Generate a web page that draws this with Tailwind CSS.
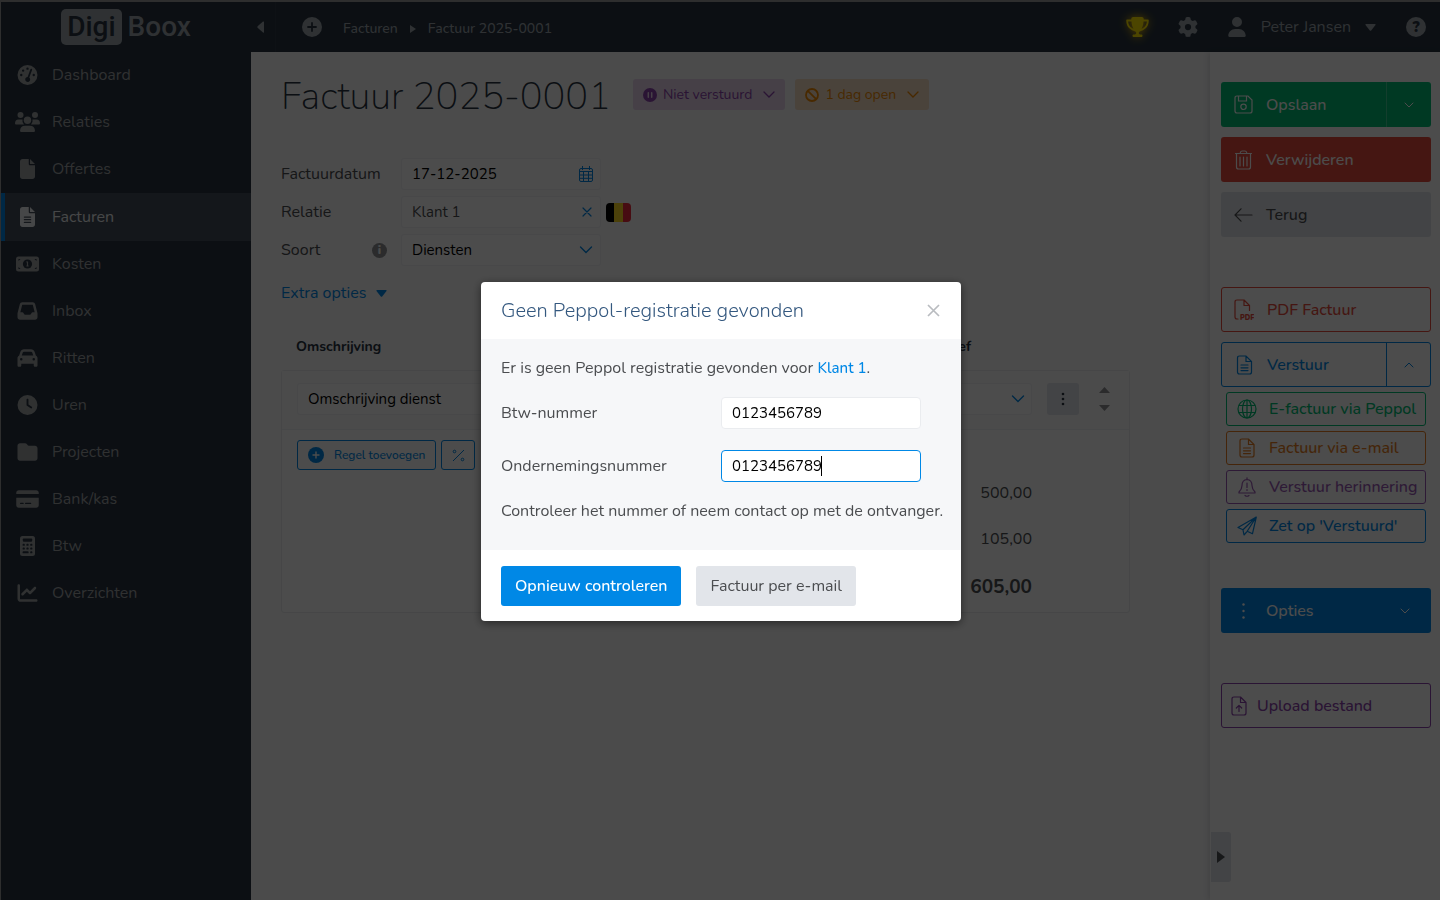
<!DOCTYPE html>
<html lang="nl">
<head>
  <meta charset="UTF-8" />
  <meta name="viewport" content="width=device-width, initial-scale=1.0" />
  <title>Factuur 2025-0001 - DigiBoox</title>
  <script src="https://cdn.jsdelivr.net/npm/@tailwindcss/browser@4"></script>
</head>
<body class="min-h-screen flex flex-col border-t-2 border-l border-[#9a9a9a] bg-[#fafafb] font-[Nunito,Lato,sans-serif] text-base leading-5 text-[#4b4d50]">

  <!-- Topbar -->
  <header class="h-[50px] flex items-center bg-[#283441] text-[#9da4ab]">
    <a href="#" class="w-[250px] shrink-0 flex items-center justify-center gap-[6px] font-[Roboto,sans-serif] text-[28px] font-medium leading-9">
      <span class="rounded-[5px] bg-[#9da4ab] px-[6px] text-[#283441]">Digi</span>
      <span>Boox</span>
    </a>
    <div class="flex-1 flex items-center">
      <button type="button" aria-label="Menu inklappen" class="w-6 h-[50px] -ml-6 border-r border-[#303b47] box-content pr-6">
        <svg class="ml-[30px] w-[7px] h-3 fill-current" viewBox="0 0 7 12"><path d="M7 1v10q0 1-1 .4L.6 6.7Q0 6 .6 5.300L6 .6Q7 0 7 1z"/></svg>
      </button>
      <button type="button" aria-label="Nieuw" class="ml-[26px]">
        <svg class="size-5" viewBox="0 0 20 20"><circle cx="10" cy="10" r="10" fill="currentColor"/><path d="M10 6v8M6 10h8" stroke="#283441" stroke-width="1.800" stroke-linecap="round"/></svg>
      </button>
      <nav class="ml-[21px] pt-[3px] flex items-center gap-3 text-sm font-medium">
        <a href="#">Facturen</a>
        <svg class="w-[6px] h-2 fill-current" viewBox="0 0 6 8"><path d="M0 0l6 4-6 4z"/></svg>
        <a href="#">Factuur 2025-0001</a>
      </nav>
      <div class="ml-auto flex items-center pr-[14px]">
        <button type="button" aria-label="Prestaties">
          <svg class="w-[23px] h-5 fill-[#ffe600] drop-shadow-[0_0_5px_#ffc800]" viewBox="0 0 576 512"><path d="M400 0H176c-26.500 0-48.100 21.800-47.100 48.200c.2 5.300 .4 10.600 .7 15.800H24C10.700 64 0 74.700 0 88c0 92.600 33.500 157 78.500 200.700c44.300 43.100 98.300 64.800 138.100 75.800c23.400 6.500 39.400 26 39.400 45.600c0 20.900-17 37.900-37.900 37.900H192c-17.700 0-32 14.300-32 32s14.300 32 32 32H384c17.700 0 32-14.300 32-32s-14.300-32-32-32H357.900C337 448 320 431 320 410.100c0-19.600 15.900-39.200 39.400-45.600c39.900-11 93.900-32.700 138.200-75.800C542.500 245 576 180.600 576 88c0-13.300-10.700-24-24-24H446.400c.3-5.200 .5-10.400 .7-15.800C448.100 21.800 426.500 0 400 0zM48.900 112h84.400c9.100 90.100 29.200 150.300 51.900 190.600c-24.900-11-50.800-26.500-73.200-48.300c-32-31.100-58-76-63-142.300zM464.100 254.300c-22.400 21.800-48.300 37.300-73.200 48.300c22.700-40.300 42.800-100.500 51.900-190.600h84.400c-5.100 66.300-31.100 111.200-63 142.300z"/></svg>
        </button>
        <button type="button" aria-label="Instellingen" class="ml-[29px]">
          <svg class="size-5 fill-current" viewBox="0 0 512 512"><path d="M495.900 166.600c3.200 8.700 .5 18.400-6.400 24.600l-43.300 39.400c1.100 8.300 1.700 16.800 1.700 25.400s-.6 17.100-1.700 25.400l43.300 39.400c6.900 6.200 9.600 15.900 6.400 24.600c-4.400 11.900-9.700 23.300-15.800 34.300l-4.700 8.100c-6.600 11-14 21.400-22.100 31.200c-5.900 7.200-15.700 9.600-24.500 6.800l-55.700-17.700c-13.400 10.300-28.200 18.900-44 25.400l-12.500 57.100c-2 9.100-9 16.300-18.200 17.800c-13.800 2.300-28 3.500-42.500 3.500s-28.700-1.200-42.500-3.500c-9.200-1.500-16.200-8.700-18.200-17.800l-12.500-57.100c-15.800-6.500-30.600-15.100-44-25.400L83.100 425.900c-8.800 2.800-18.600 .3-24.500-6.800c-8.100-9.800-15.500-20.200-22.100-31.200l-4.700-8.100c-6.100-11-11.400-22.400-15.800-34.300c-3.200-8.700-.5-18.400 6.400-24.600l43.300-39.400C64.600 273.100 64 264.600 64 256s.6-17.100 1.700-25.400L22.400 191.200c-6.900-6.200-9.600-15.900-6.400-24.600c4.400-11.900 9.700-23.300 15.800-34.300l4.700-8.100c6.600-11 14-21.400 22.100-31.200c5.900-7.200 15.700-9.600 24.500-6.800l55.700 17.700c13.400-10.300 28.200-18.900 44-25.400l12.500-57.100c2-9.100 9-16.300 18.200-17.800C227.300 1.200 241.500 0 256 0s28.700 1.200 42.500 3.500c9.200 1.500 16.200 8.700 18.200 17.800l12.500 57.100c15.800 6.500 30.600 15.100 44 25.400l55.700-17.700c8.800-2.800 18.600-.3 24.500 6.800c8.100 9.800 15.500 20.200 22.100 31.200l4.700 8.100c6.100 11 11.400 22.400 15.800 34.300zM256 336a80 80 0 1 0 0-160 80 80 0 1 0 0 160z"/></svg>
        </button>
        <button type="button" class="ml-[30px] flex items-center">
          <svg class="w-[18px] h-5 fill-current" viewBox="0 0 448 512"><path d="M224 256A128 128 0 1 0 224 0a128 128 0 1 0 0 256zm-45.700 48C79.800 304 0 383.800 0 482.300C0 498.700 13.300 512 29.700 512H418.300c16.400 0 29.700-13.300 29.700-29.700C448 383.800 368.200 304 269.700 304H178.300z"/></svg>
          <span class="ml-[15px]">Peter Jansen</span>
          <svg class="ml-[14px] w-[11px] h-[7px] fill-current" viewBox="0 0 11 7"><path d="M1 0h9q1 0 .5 1L6.200 6.500q-.7.7-1.400 0L.5 1Q0 0 1 0z"/></svg>
        </button>
        <button type="button" aria-label="Help" class="ml-[30px] size-5 rounded-full bg-[#9da4ab] text-[15px] font-black text-[#283441]">?</button>
      </div>
    </div>
  </header>

  <div class="flex-1 flex">
    <!-- Zijmenu -->
    <aside class="w-[250px] shrink-0 bg-[#283441] text-[#a0a3a6]">
      <nav class="flex flex-col *:h-[47px] *:flex *:items-center *:gap-3 *:pl-[14px] *:pb-[2px]">
        <a href="#">
          <svg class="w-[25px] h-5 fill-current" viewBox="0 0 640 512"><path fill-rule="evenodd" d="M320 0a256 256 0 1 1 0 512a256 256 0 1 1 0-512zM320 64a30 30 0 1 0 0 60 30 30 0 1 0 0-60zM208 112a30 30 0 1 0 0 60 30 30 0 1 0 0-60zM160 226a30 30 0 1 0 0 60 30 30 0 1 0 0-60zM480 226a30 30 0 1 0 0 60 30 30 0 1 0 0-60zM427 98c-12-6-26 0-32 12l-72 194c-35 2-62 28-62 62a64 64 0 1 0 104-48l72-190c4-12-1-25-10-30z"/></svg>
          Dashboard</a>
        <a href="#">
          <svg class="w-[25px] h-5 fill-current" viewBox="0 0 25 20"><circle cx="5.500" cy="3" r="3"/><circle cx="20" cy="3" r="3"/><circle cx="12.500" cy="8.300" r="3.700"/><path d="M3.500 7.500h4q-.6 3 1.500 5H1q-1 0-1-1Q0 7.500 3.500 7.500zM21.500 7.500h-4q.6 3-1.500 5h8q1 0 1-1 0-4-3.500-4zM10 13.800h5q4.600 0 5 5 0 1.200-1.200 1.200H6.200Q5 20 5 18.800q.4-5 5-5z"/></svg>
          Relaties</a>
        <a href="#">
          <svg class="w-[25px] h-5 fill-current" viewBox="0 0 384 512"><path d="M0 64C0 28.700 28.700 0 64 0H224V128c0 17.700 14.300 32 32 32H384V448c0 35.300-28.700 64-64 64H64c-35.300 0-64-28.700-64-64V64zm384 64H256V0L384 128z"/></svg>
          Offertes</a>
        <a href="#" class="h-12! pl-[10px]! pb-0! border-l-4 border-[#0088e6] bg-[#454e5a] text-[#eceef0]">
          <svg class="w-[25px] h-5 fill-current" viewBox="0 0 384 512"><path d="M0 64C0 28.700 28.700 0 64 0H224V128c0 17.700 14.300 32 32 32H384V448c0 35.300-28.700 64-64 64H64c-35.300 0-64-28.700-64-64V64zm384 64H256V0L384 128z"/><path d="M112 256h160M112 326h160M112 396h160" stroke="#454e5a" stroke-width="32" stroke-linecap="round"/></svg>
          Facturen</a>
        <a href="#">
          <svg class="w-[25px] h-5" viewBox="0 0 25 20"><rect x="1" y="2.500" width="23" height="15" rx="2.500" fill="currentColor"/><circle cx="12.500" cy="10" r="4.600" fill="#283441"/><path d="M12.500 7.800v4M11.500 8.200l1-.6M11.400 12h2.200" stroke="currentColor" stroke-width="1.200"/><path d="M3.500 5h2l-2 2zM21.500 5h-2l2 2zM3.500 15h2l-2-2zM21.500 15h-2l2-2z" fill="#283441"/></svg>
          Kosten</a>
        <a href="#">
          <svg class="w-[25px] h-5 fill-current" viewBox="0 0 512 512"><path d="M121 32C91.600 32 66 52 58.900 80.500L1.900 308.400C.6 313.500 0 318.700 0 323.900V416c0 35.300 28.700 64 64 64H448c35.300 0 64-28.700 64-64V323.900c0-5.200-.6-10.400-1.900-15.500l-57-227.900C446 52 420.400 32 391 32H121zm0 64H391l48 192H387.800c-12.100 0-23.200 6.800-28.600 17.700l-14.300 28.600c-5.400 10.800-16.500 17.700-28.600 17.700H195.800c-12.100 0-23.200-6.800-28.600-17.700l-14.300-28.600c-5.400-10.800-16.500-17.700-28.600-17.700H73L121 96z"/></svg>
          Inbox</a>
        <a href="#">
          <svg class="w-[25px] h-5 fill-current" viewBox="0 0 512 512"><path d="M135.200 117.400L109.100 192H402.900l-26.100-74.600C372.300 104.600 360.200 96 346.600 96H165.400c-13.600 0-25.700 8.600-30.200 21.400zM39.600 196.800L74.800 96.300C88.300 57.800 124.600 32 165.400 32H346.600c40.800 0 77.100 25.800 90.600 64.300l35.200 100.500c23.200 9.600 39.600 32.500 39.600 59.200V400v48c0 17.700-14.300 32-32 32H448c-17.700 0-32-14.300-32-32V400H96v48c0 17.700-14.300 32-32 32H32c-17.700 0-32-14.300-32-32V400 256c0-26.700 16.400-49.600 39.600-59.200zM128 288a32 32 0 1 0 -64 0 32 32 0 1 0 64 0zm288 32a32 32 0 1 0 0-64 32 32 0 1 0 0 64z"/></svg>
          Ritten</a>
        <a href="#">
          <svg class="w-[25px] h-5 fill-current" viewBox="0 0 512 512"><path d="M256 0a256 256 0 1 1 0 512A256 256 0 1 1 256 0zM232 120V256c0 8 4 15.500 10.700 20l96 64c11 7.400 25.900 4.400 33.300-6.700s4.400-25.900-6.700-33.300L280 243.200V120c0-13.300-10.700-24-24-24s-24 10.700-24 24z"/></svg>
          Uren</a>
        <a href="#">
          <svg class="w-[25px] h-5 fill-current" viewBox="0 0 512 512"><path d="M64 480H448c35.300 0 64-28.700 64-64V160c0-35.300-28.700-64-64-64H288c-10.100 0-19.600-4.700-25.600-12.800L243.200 57.600C231.100 41.500 212.100 32 192 32H64C28.700 32 0 60.700 0 96V416c0 35.300 28.700 64 64 64z"/></svg>
          Projecten</a>
        <a href="#">
          <svg class="w-[25px] h-5 fill-current" viewBox="0 0 576 512"><path d="M64 32C28.700 32 0 60.700 0 96v32H576V96c0-35.300-28.700-64-64-64H64zM576 224H0V416c0 35.300 28.700 64 64 64H512c35.300 0 64-28.700 64-64V224zM112 352h64c8.800 0 16 7.200 16 16s-7.200 16-16 16H112c-8.800 0-16-7.200-16-16s7.200-16 16-16zm112 16c0-8.800 7.200-16 16-16H368c8.800 0 16 7.200 16 16s-7.200 16-16 16H240c-8.800 0-16-7.200-16-16z"/></svg>
          Bank/kas</a>
        <a href="#">
          <svg class="w-[25px] h-5" viewBox="0 0 384 512"><rect width="384" height="512" rx="64" fill="currentColor"/><g fill="#283441"><rect x="72" y="64" width="240" height="80" rx="20"/><rect x="66" y="200" width="58" height="50" rx="22"/><rect x="163" y="200" width="58" height="50" rx="22"/><rect x="260" y="200" width="58" height="50" rx="22"/><rect x="66" y="296" width="58" height="50" rx="22"/><rect x="163" y="296" width="58" height="50" rx="22"/><rect x="260" y="296" width="58" height="50" rx="22"/><rect x="66" y="392" width="155" height="50" rx="22"/><rect x="260" y="392" width="58" height="50" rx="22"/></g></svg>
          Btw</a>
        <a href="#">
          <svg class="w-[25px] h-5 fill-current" viewBox="0 0 512 512"><path d="M64 64c0-17.700-14.300-32-32-32S0 46.300 0 64V400c0 44.200 35.800 80 80 80H480c17.700 0 32-14.300 32-32s-14.300-32-32-32H80c-8.800 0-16-7.200-16-16V64zm406.600 86.600c12.500-12.500 12.500-32.800 0-45.300s-32.800-12.500-45.300 0L320 210.700l-57.400-57.400c-12.500-12.500-32.800-12.500-45.300 0l-112 112c-12.500 12.500-12.500 32.800 0 45.300s32.800 12.500 45.300 0L240 221.300l57.400 57.400c12.500 12.500 32.800 12.500 45.300 0l128-128z"/></svg>
          Overzichten</a>
      </nav>
    </aside>

    <!-- Factuur -->
    <main class="flex-1 min-w-0 px-[30px] pt-[22px]">
      <div class="flex items-start">
        <h1 class="text-[38px] font-extralight leading-[46px] text-[#283441]">Factuur 2025-0001</h1>
        <button type="button" class="ml-[22px] mt-[5px] h-[31px] rounded-[3px] bg-[#e9d8ee] px-[10px] flex items-center gap-[6px] text-sm text-[#8e44ad]">
          <svg class="size-[14px]" viewBox="0 0 14 14"><circle cx="7" cy="7" r="7" fill="currentColor"/><path d="M5.300 4.800v4.400M8.700 4.800v4.400" stroke="#e9d8ee" stroke-width="1.500" stroke-linecap="round"/></svg>
          Niet verstuurd
          <svg class="ml-[5px] w-3 h-[7px] fill-none stroke-current" viewBox="0 0 12 7"><path d="M1 1l5 5 5-5" stroke-width="1.300" stroke-linecap="round"/></svg>
        </button>
        <button type="button" class="ml-[10px] mt-[5px] h-[31px] rounded-[3px] bg-[#f9dfc6] px-[10px] flex items-center gap-[6px] text-sm text-[#f08a00]">
          <svg class="size-[14px] fill-none stroke-current" viewBox="0 0 14 14"><circle cx="7" cy="7" r="6" stroke-width="1.800"/><path d="M2.800 2.800l8.400 8.400" stroke-width="1.800"/></svg>
          1 dag open
          <svg class="ml-[5px] w-3 h-[7px] fill-none stroke-current" viewBox="0 0 12 7"><path d="M1 1l5 5 5-5" stroke-width="1.300" stroke-linecap="round"/></svg>
        </button>
      </div>

      <form class="mt-[38px] flex flex-col gap-[6px]">
        <div class="flex items-center">
          <label for="datum" class="w-[120px]">Factuurdatum</label>
          <div class="relative w-[200px]">
            <input id="datum" type="text" value="17-12-2025" class="w-full h-8 rounded-[3px] border border-[#f1f2f4] bg-white px-[10px] text-[15px] text-black" />
            <svg class="absolute right-2 top-2 w-[14px] h-4 fill-none stroke-[#0088e6]" viewBox="0 0 14 16"><rect x=".5" y="2.500" width="13" height="13" rx="1.500"/><path d="M.5 5.500h13M.5 9h13M.5 12.300h13M4.500 5.500v10M9.500 5.500v10M3.500 0v4M10.500 0v4"/></svg>
          </div>
        </div>
        <div class="flex items-center">
          <label for="relatie" class="w-[120px]">Relatie</label>
          <div class="relative w-[200px]">
            <input id="relatie" type="text" value="Klant 1" class="w-full h-8 rounded-[3px] border border-[#f1f2f4] bg-white px-[10px] text-[15px]" />
            <button type="button" aria-label="Relatie wissen" class="absolute right-[9px] top-[11px]">
              <svg class="size-[10px] stroke-[#0088e6]" viewBox="0 0 10 10"><path d="M1 1l8 8M9 1L1 9" stroke-width="1.200" stroke-linecap="round"/></svg>
            </button>
          </div>
          <svg class="ml-[5px] w-[25px] h-[19px]" viewBox="0 0 25 19"><clipPath id="vlag"><rect width="25" height="19" rx="4"/></clipPath><g clip-path="url(#vlag)"><path fill="#000" d="M0 0h9v19H0z"/><path fill="#fdda24" d="M8 0h9v19H8z"/><path fill="#ef2b3d" d="M17 0h8v19h-8z"/></g></svg>
        </div>
        <div class="flex items-center">
          <div class="w-[120px] flex items-center justify-between pr-[14px]">
            <label for="soort">Soort</label>
            <span class="size-[15px] rounded-full bg-[#8f9194] text-center text-xs font-black leading-[15px] text-[#fafafb]">i</span>
          </div>
          <div class="relative w-[200px]">
            <select id="soort" class="w-full h-8 appearance-none rounded-[3px] border border-[#f1f2f4] bg-white px-[10px] text-[15px] text-black"><option>Diensten</option></select>
            <svg class="absolute right-2 top-3 w-[14px] h-2 fill-none stroke-[#0088e6]" viewBox="0 0 14 8"><path d="M1.500 1L7 6.500 12.500 1" stroke-width="1.400" stroke-linecap="round"/></svg>
          </div>
        </div>
      </form>

      <a href="#" class="mt-[17px] inline-flex items-center gap-[10px] text-[#0088e6]">Extra opties
        <svg class="w-[11px] h-[7px] fill-current" viewBox="0 0 11 7"><path d="M1 0h9q1 0 .5 1L6.200 6.500q-.7.7-1.400 0L.5 1Q0 0 1 0z"/></svg>
      </a>

      <section class="mt-[34px] max-w-[849px]">
        <div class="flex justify-between pl-[15px] pr-[159px] text-sm font-bold text-[#283441]">
          <span>Omschrijving</span>
          <span>Btw-tarief</span>
        </div>
        <div class="mt-[13px] rounded-[3px] border border-[#eaecef] bg-[#fdfdfd]">
          <div class="flex items-center border-b border-[#eff0f3] bg-[#fafafb] px-[15px] pt-3 pb-[14px]">
            <input type="text" aria-label="Omschrijving" value="Omschrijving dienst" class="w-[400px] h-8 rounded-[3px] border border-[#f1f2f4] bg-white px-[10px] text-[15px] text-black" />
            <div class="relative ml-auto w-[200px]">
              <select aria-label="Btw-tarief" class="w-full h-8 appearance-none rounded-[3px] border border-[#f1f2f4] bg-white px-[10px] text-[15px] text-black"><option>21%</option></select>
              <svg class="absolute right-[7px] top-3 w-[14px] h-2 fill-none stroke-[#0088e6]" viewBox="0 0 14 8"><path d="M1.500 1L7 6.500 12.500 1" stroke-width="1.400" stroke-linecap="round"/></svg>
            </div>
            <button type="button" aria-label="Regelopties" class="ml-[15px] size-8 rounded-[3px] bg-[#e0e3e9]">
              <svg class="mx-auto w-1 h-[14px] fill-[#283441]" viewBox="0 0 4 14"><circle cx="2" cy="2" r="1.300"/><circle cx="2" cy="7" r="1.300"/><circle cx="2" cy="12" r="1.300"/></svg>
            </button>
            <div class="ml-5 mr-1 flex flex-col gap-3 text-[#8f9194]">
              <button type="button" aria-label="Omhoog"><svg class="w-[11px] h-[6px] fill-current" viewBox="0 0 11 6"><path d="M5.500 0L11 6H0z"/></svg></button>
              <button type="button" aria-label="Omlaag"><svg class="w-[11px] h-[6px] fill-current" viewBox="0 0 11 6"><path d="M5.500 6L0 0h11z"/></svg></button>
            </div>
          </div>
          <div class="flex gap-[5px] px-[15px] pt-[10px]">
            <button type="button" class="h-[30px] rounded-[3px] border border-[#0088e6] px-[10px] flex items-center gap-[10px] text-xs font-medium text-[#0088e6]">
              <svg class="size-4" viewBox="0 0 16 16"><circle cx="8" cy="8" r="8" fill="currentColor"/><path d="M8 5v6M5 8h6" stroke="#fff" stroke-width="1.400" stroke-linecap="round"/></svg>
              Regel toevoegen
            </button>
            <button type="button" aria-label="Korting" class="h-[30px] w-[34px] rounded-[3px] border border-[#0088e6]">
              <svg class="mx-auto size-[13px] fill-none stroke-[#0088e6]" viewBox="0 0 13 13"><path d="M12 1L1 12"/><circle cx="2.500" cy="2.500" r="1.300"/><circle cx="10.500" cy="10.500" r="1.300"/></svg>
            </button>
          </div>
          <dl class="flex flex-col items-end pr-[97px] *:h-[46px] *:flex *:items-center">
            <dd>500,00</dd>
            <dd>105,00</dd>
            <dd class="h-[50px]! text-[19px] font-bold">605,00</dd>
          </dl>
        </div>
      </section>
    </main>

    <!-- Acties -->
    <aside class="relative w-[230px] shrink-0 bg-[#fdfdfd] shadow-[-2px_0_5px_#0000001a] pl-[11px] pr-[9px] pt-[30px] font-medium">
      <div class="h-[45px] flex rounded-[3px] bg-[#00c076] text-white">
        <button type="button" class="flex-1 flex items-center gap-[13px] pl-[13px] text-left">
          <svg class="size-[19px] fill-none stroke-current" viewBox="0 0 19 19"><path d="M3 1h11l4 4v11q0 2-2 2H3q-2 0-2-2V3q0-2 2-2zM4.500 1v5h8V1" stroke-width="1.200"/><circle cx="9.500" cy="11.800" r="2.700" stroke-width="1.200"/></svg>
          Opslaan
        </button>
        <button type="button" aria-label="Meer opslagopties" class="w-[45px] border-l border-white/25">
          <svg class="mx-auto w-[10px] h-[6px] fill-none stroke-current" viewBox="0 0 10 6"><path d="M1 1l4 4 4-4" stroke-linecap="round"/></svg>
        </button>
      </div>
      <button type="button" class="mt-[10px] w-full h-[45px] flex items-center gap-[13px] rounded-[3px] bg-[#e74c3c] pl-[13px] text-white">
        <svg class="w-[19px] h-5 fill-none stroke-current" viewBox="0 0 19 20"><path d="M1.500 3.500h16M6 3.500q.5-2.500 2-2.500h3q1.500 0 2 2.500M2.500 3.500v13.500q0 2 2 2h10q2 0 2-2V3.500M6 7v9M9.500 7v9M13 7v9" stroke-width="1.200" stroke-linecap="round"/></svg>
        Verwijderen
      </button>
      <button type="button" class="mt-[10px] w-full h-[45px] flex items-center gap-[13px] rounded-[3px] bg-[#e2e5ea] pl-[13px]">
        <svg class="w-[19px] h-[14px] fill-none stroke-current" viewBox="0 0 19 14"><path d="M1 7h17M7 .8L1 7l6 6.200" stroke-width="1.200" stroke-linecap="round"/></svg>
        Terug
      </button>

      <button type="button" class="mt-[50px] w-full h-[45px] flex items-center gap-[13px] rounded-[3px] border border-[#e74c3c] pl-3 text-[#e74c3c]">
        <svg class="w-5 h-[22px] fill-none stroke-current" viewBox="0 0 20 22"><path d="M4 20H3q-2 0-2-2V3q0-2 2-2H10l5.500 5.500v5M10 1v5.500h5.500" stroke-width="1.200" stroke-linecap="round" stroke-linejoin="round"/><text x="6" y="20.500" font-size="7" font-weight="900" fill="currentColor" stroke="none">PDF</text></svg>
        PDF Factuur
      </button>
      <div class="mt-[10px] h-[45px] flex rounded-[3px] border border-[#0088e6] text-[#0088e6]">
        <button type="button" class="flex-1 flex items-center gap-[13px] pl-[13px]">
          <svg class="w-[19px] h-5 fill-none stroke-current" viewBox="0 0 19 20"><path d="M4.500 1H11l5.500 5.500V17q0 2-2 2h-10q-2 0-2-2V3q0-2 2-2zM11 1v5.500h5.500M6 10h7M6 12.800h7M6 15.600h7" stroke-width="1.200" stroke-linecap="round"/></svg>
          Verstuur
        </button>
        <button type="button" aria-label="Verzendopties" class="w-11 border-l border-[#0088e6]">
          <svg class="mx-auto w-[10px] h-[6px] fill-none stroke-current" viewBox="0 0 10 6"><path d="M1 5l4-4 4 4" stroke-linecap="round"/></svg>
        </button>
      </div>
      <div class="mt-[5px] px-[5px] flex flex-col gap-[5px] whitespace-nowrap *:h-[34px] *:flex *:items-center *:gap-3 *:rounded-[3px] *:border *:pl-[10px]">
        <button type="button" class="border-[#00c076] text-[#00c076]">
          <svg class="size-5 shrink-0 fill-none stroke-current" viewBox="0 0 20 20"><g stroke-width="1.200"><circle cx="10" cy="10" r="9"/><ellipse cx="10" cy="10" rx="4.500" ry="9"/><path d="M10 1v18M2 6.500h16M2 13.500h16" /></g></svg>
          E-factuur via Peppol
        </button>
        <button type="button" class="border-[#e67e22] text-[#e67e22]">
          <svg class="size-5 shrink-0 fill-none stroke-current" viewBox="0 0 19 20"><path d="M4.500 1H11l5.500 5.500V17q0 2-2 2h-10q-2 0-2-2V3q0-2 2-2zM11 1v5.500h5.500M6 10h7M6 12.800h7M6 15.600h7" stroke-width="1.200" stroke-linecap="round"/></svg>
          Factuur via e-mail
        </button>
        <button type="button" class="border-[#9b59b6] text-[#9b59b6]">
          <svg class="size-5 shrink-0 fill-none stroke-current" viewBox="0 0 20 20"><path d="M10 .8v1.700M10 2.500q-5 .5-5 6 0 3.500-3 6.500v1h16v-1q-3-3-3-6.500 0-5.500-5-6zM8 18.500q2 1.500 4 0M10 6v4.500M10 12.500v1" stroke-width="1.200" stroke-linecap="round" stroke-linejoin="round"/></svg>
          Verstuur herinnering
        </button>
        <button type="button" class="border-[#0088e6] text-[#0088e6]">
          <svg class="size-5 shrink-0 fill-none stroke-current" viewBox="0 0 20 20"><path d="M19.300 1L1 11.500l5 2.300 1 5.200 3.200-3.700 5.300 2.400zM19.300 1L6 13.800M19.300 1l-9.100 14.300" stroke-width="1.200" stroke-linejoin="round"/></svg>
          Zet op 'Verstuurd'
        </button>
      </div>

      <button type="button" class="mt-[45px] w-full h-[45px] flex items-center gap-[13px] rounded-[3px] bg-[#0088e6] pl-[13px] pr-[21px] text-white">
        <svg class="w-[19px] h-4 fill-current" viewBox="0 0 19 16"><circle cx="9.500" cy="1.500" r="1.200"/><circle cx="9.500" cy="8" r="1.200"/><circle cx="9.500" cy="14.500" r="1.200"/></svg>
        Opties
        <svg class="ml-auto w-[10px] h-[6px] fill-none stroke-current" viewBox="0 0 10 6"><path d="M1 1l4 4 4-4" stroke-linecap="round"/></svg>
      </button>
      <button type="button" class="mt-[50px] w-full h-[45px] flex items-center gap-[10px] rounded-[3px] border border-[#8e44ad] pl-[9px] text-[#8e44ad]">
        <svg class="w-4 h-5 fill-none stroke-current" viewBox="0 0 16 20"><path d="M3 1h6.500L15 6.500V17q0 2-2 2H3q-2 0-2-2V3q0-2 2-2zM9.500 1v5.500H15M8 15.500v-6M5.300 12L8 9.300l2.700 2.700" stroke-width="1.200" stroke-linecap="round" stroke-linejoin="round"/></svg>
        Upload bestand
      </button>

      <button type="button" aria-label="Paneel inklappen" class="absolute left-px bottom-[18px] w-5 h-[50px] rounded-r-[3px] bg-[#e0e3e9]">
        <svg class="ml-[6px] w-2 h-3 fill-[#4e5154]" viewBox="0 0 8 12"><path d="M0 0v12l8-6z"/></svg>
      </button>
    </aside>
  </div>

  <!-- Dialoog -->
  <div class="fixed inset-0 flex items-start justify-center bg-black/70 pt-[282px]">
    <div role="dialog" aria-labelledby="dialoog-titel" class="w-[480px] ml-[2px] overflow-hidden rounded-[4px] bg-white shadow-[0_2px_10px_#00000080]">
      <div class="h-[57px] flex items-center justify-between px-5">
        <h2 id="dialoog-titel" class="text-xl font-light text-[#34587f]">Geen Peppol-registratie gevonden</h2>
        <button type="button" aria-label="Sluiten" class="mr-[1px]">
          <svg class="size-[13px] stroke-[#b9bcc0]" viewBox="0 0 13 13"><path d="M1 1l11 11M12 1L1 12" stroke-width="1.700"/></svg>
        </button>
      </div>
      <div class="h-[211px] bg-[#f6f7f9] px-5 pt-[19px]">
        <p>Er is geen Peppol registratie gevonden voor <a href="#" class="text-[15px] font-medium text-[#0088e6]">Klant 1</a>.</p>
        <div class="mt-[19px] flex items-center">
          <label for="btw" class="w-[220px]">Btw-nummer</label>
          <input id="btw" type="text" value="0123456789" class="w-[200px] h-8 rounded-[4px] border border-[#eaecef] bg-white px-[10px] text-[15px] text-black" />
        </div>
        <div class="mt-[21px] flex items-center">
          <label for="ondernemingsnummer" class="w-[220px]">Ondernemingsnummer</label>
          <div class="relative w-[200px]">
            <input id="ondernemingsnummer" type="text" value="0123456789" class="w-full h-8 rounded-[4px] border border-[#0088e6] bg-white px-[10px] text-[15px] text-black caret-transparent outline-none" />
            <span class="absolute left-[100px] top-[6px] w-px h-5 bg-black"></span>
          </div>
        </div>
        <p class="mt-[19px] whitespace-nowrap">Controleer het nummer of neem contact op met de ontvanger.</p>
      </div>
      <div class="flex gap-[15px] px-5 pt-4 pb-[15px]">
        <button type="button" class="h-10 rounded-[3px] bg-[#0088e6] px-[14px] font-medium text-white">Opnieuw controleren</button>
        <button type="button" class="h-10 rounded-[3px] bg-[#e2e5ea] px-[14px]">Factuur per e-mail</button>
      </div>
    </div>
  </div>
</body>
</html>
